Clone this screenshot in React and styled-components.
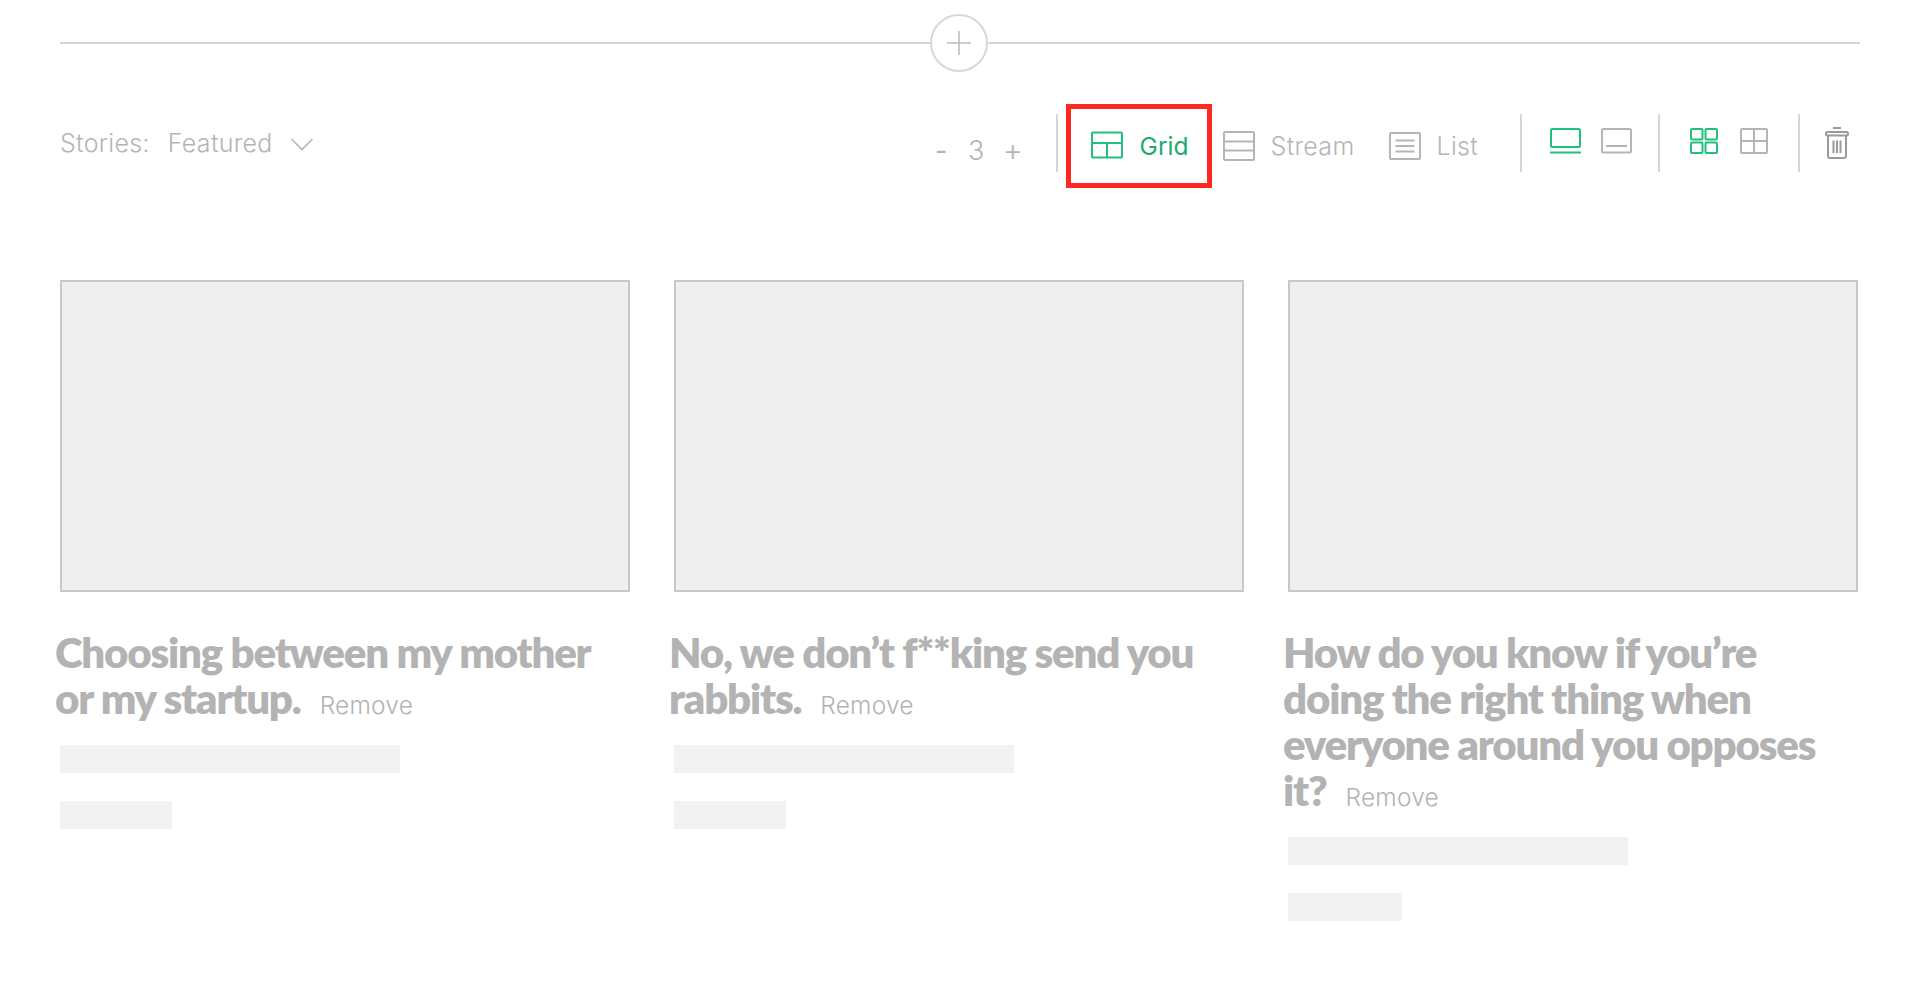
import React from 'react';
import styled, { createGlobalStyle } from 'styled-components';

const GlobalStyle = createGlobalStyle`
    html, body {
        margin: 0;
        background: #fff;
    }
    body {
        font-family: Inter, "Liberation Sans", sans-serif;
    }
`;

const GREEN = '#1fbf7c';
const GREY = '#b5b5b5';

const STORIES = [
    { id: 1, title: 'Choosing between my mother or my startup.', shortBar: 112 },
    { id: 2, title: 'No, we don’t f**king send you rabbits.', shortBar: 112 },
    { id: 3, title: 'How do you know if you’re doing the right thing when everyone around you opposes it?', shortBar: 114 },
];

const IconBox = ({ color = GREY, w = 32, h = 28, children }) => (
    <svg width={w} height={h} viewBox={`0 0 ${w} ${h}`} fill="none" stroke={color} strokeWidth="2" strokeLinejoin="round">
        {children}
    </svg>
);

const App = () => {
    return (
        <Page>
            <GlobalStyle />
            <Divider>
                <Rule />
                <AddCircle>
                    <svg width="24" height="24" viewBox="0 0 24 24" stroke="#bdbdbd" strokeWidth="1.6">
                        <path d="M12 0v24M0 12h24" />
                    </svg>
                </AddCircle>
                <Rule />
            </Divider>

            <Toolbar>
                <Stories>
                    <span>Stories:</span>
                    <Featured>Featured</Featured>
                    <svg width="24" height="14" viewBox="0 0 24 14" fill="none" stroke={GREY} strokeWidth="1.6">
                        <path d="M1.5 2l10.5 10.5L22.500 2" />
                    </svg>
                </Stories>

                <Counter>
                    <Minus>-</Minus>
                    <Count>3</Count>
                    <Plus>+</Plus>
                </Counter>
                <Sep $left={33} />

                <Selected>
                    <IconBox color={GREEN} w={32} h={28}>
                        <rect x="1" y="1.500" width="30" height="25" rx="1" />
                        <path d="M1 12h30M16 12v14.500" />
                    </IconBox>
                    <SelectedLabel>Grid</SelectedLabel>
                </Selected>

                <Option $left={11}>
                    <IconBox w={32} h={30}>
                        <rect x="1" y="1" width="30" height="28" rx="1" />
                        <path d="M1 10.500h30M1 19.500h30" />
                    </IconBox>
                    <OptionLabel>Stream</OptionLabel>
                </Option>

                <Option $left={34}>
                    <IconBox w={32} h={28}>
                        <rect x="1" y="1" width="30" height="26" rx="1" />
                        <path d="M6.500 8.500h19M6.500 14h19M6.500 19.500h19" />
                    </IconBox>
                    <OptionLabel>List</OptionLabel>
                </Option>
                <Sep $left={42} />

                <IconGroup $gap={20} $left={28}>
                    <IconBox color={GREEN} w={31} h={26}>
                        <rect x="1" y="1" width="29" height="18" rx="1.500" />
                        <path d="M0 24.500h31" />
                    </IconBox>
                    <IconBox w={31} h={26}>
                        <rect x="1" y="1" width="29" height="23.500" rx="1.500" />
                        <path d="M5 18h21" />
                    </IconBox>
                </IconGroup>
                <Sep $left={26} />

                <IconGroup $gap={22} $left={30}>
                    <IconBox color={GREEN} w={28} h={26}>
                        <rect x="1" y="1" width="11.500" height="10.500" rx="1" />
                        <rect x="15.500" y="1" width="11.500" height="10.500" rx="1" />
                        <rect x="1" y="14.500" width="11.500" height="10.500" rx="1" />
                        <rect x="15.500" y="14.500" width="11.500" height="10.500" rx="1" />
                    </IconBox>
                    <IconBox w={28} h={26}>
                        <rect x="1" y="1" width="26" height="24" rx="1" />
                        <path d="M14 1v24M1 13h26" />
                    </IconBox>
                </IconGroup>
                <Sep $left={30} />

                <Trash>
                    <svg width="24" height="32" viewBox="0 0 24 32" fill="none" stroke="#9a9a9a" strokeWidth="2">
                        <path d="M8 1h8" />
                        <rect x="1" y="5" width="22" height="3.500" rx="1.500" />
                        <path d="M3 8.500V29a2 2 0 002 2h14a2 2 0 002-2V8.500" />
                        <path d="M8.500 13.500v12.500M12 13.500v12.500M15.500 13.500v12.500" />
                    </svg>
                </Trash>
            </Toolbar>

            <Cards>
                {STORIES.map((story) => (
                    <Card key={story.id}>
                        <Thumb />
                        <Title>
                            {story.title}
                            <Remove>Remove</Remove>
                        </Title>
                        <LongBar />
                        <ShortBar style={{ width: story.shortBar }} />
                    </Card>
                ))}
            </Cards>
        </Page>
    );
};

const Page = styled.div`
    width: 1920px;
    min-height: 1006px;
    box-sizing: border-box;
    padding: 14px 60px 0;
`;

const Divider = styled.div`
    display: flex;
    align-items: center;
`;

const Rule = styled.div`
    flex: 1;
    height: 2px;
    background: #d6d6d6;
`;

const AddCircle = styled.div`
    width: 58px;
    height: 58px;
    margin-left: -2px;
    box-sizing: border-box;
    border: 2px solid #d8d8d8;
    border-radius: 50%;
    display: flex;
    align-items: center;
    justify-content: center;
`;

const Toolbar = styled.div`
    display: flex;
    align-items: center;
    height: 84px;
    margin-top: 32px;
`;

const Stories = styled.div`
    display: flex;
    align-items: center;
    width: 875px;
    margin-bottom: 6px;
    font-size: 25px;
    font-weight: 300;
    letter-spacing: 0.3px;
    color: ${GREY};
    svg {
        margin-left: 17px;
        margin-top: 1px;
    }
`;

const Featured = styled.span`
    margin-left: 18px;
`;

const Counter = styled.div`
    display: flex;
    align-items: center;
    margin-top: 8px;
    font-size: 27px;
    font-weight: 300;
    color: ${GREY};
`;

const Minus = styled.span`
    width: 33px;
    font-weight: 400;
`;

const Count = styled.span`
    width: 35px;
`;

const Plus = styled.span`
    font-size: 30px;
`;

const Sep = styled.div`
    width: 2px;
    height: 58px;
    margin-left: ${(p) => p.$left}px;
    margin-bottom: 6px;
    background: #d6d6d6;
`;

const Selected = styled.div`
    display: flex;
    align-items: center;
    box-sizing: border-box;
    width: 146px;
    height: 84px;
    margin-left: 8px;
    padding-left: 20px;
    border: 5px solid #ff2a1f;
    svg {
        margin-top: -2px;
    }
`;

const SelectedLabel = styled.span`
    margin-left: 17px;
    font-size: 24.500px;
    font-weight: 400;
    color: #1aab6d;
`;

const Option = styled.div`
    display: flex;
    align-items: center;
    margin-left: ${(p) => p.$left}px;
`;

const OptionLabel = styled.span`
    margin-left: 16px;
    font-size: 25px;
    font-weight: 300;
    letter-spacing: 0.3px;
    color: ${GREY};
`;

const IconGroup = styled.div`
    display: flex;
    align-items: center;
    gap: ${(p) => p.$gap}px;
    margin-left: ${(p) => p.$left}px;
    margin-bottom: 10px;
`;

const Trash = styled.div`
    display: flex;
    margin-left: 25px;
    margin-bottom: 6px;
`;

const Cards = styled.div`
    display: grid;
    grid-template-columns: repeat(3, 570px);
    column-gap: 44px;
    align-items: start;
    margin-top: 92px;
`;

const Card = styled.article`
    display: flex;
    flex-direction: column;
`;

const Thumb = styled.div`
    height: 312px;
    box-sizing: border-box;
    background: #efefef;
    border: 2px solid #c8c8c8;
`;

const Title = styled.h2`
    margin: 37px 0 0 -5px;
    width: 560px;
    font-family: Lato, "Noto Sans", sans-serif;
    font-size: 42px;
    font-weight: 800;
    line-height: 46px;
    letter-spacing: -1.2px;
    color: #b3b3b3;
`;

const Remove = styled.span`
    margin-left: 19px;
    font-family: Inter, "Liberation Sans", sans-serif;
    font-size: 24.500px;
    font-weight: 300;
    letter-spacing: 0.2px;
    color: #b3b3b3;
`;

const LongBar = styled.div`
    width: 340px;
    height: 28px;
    margin-top: 17px;
    background: #f2f2f2;
`;

const ShortBar = styled.div`
    height: 28px;
    margin-top: 28px;
    background: #f2f2f2;
`;

export default App;
